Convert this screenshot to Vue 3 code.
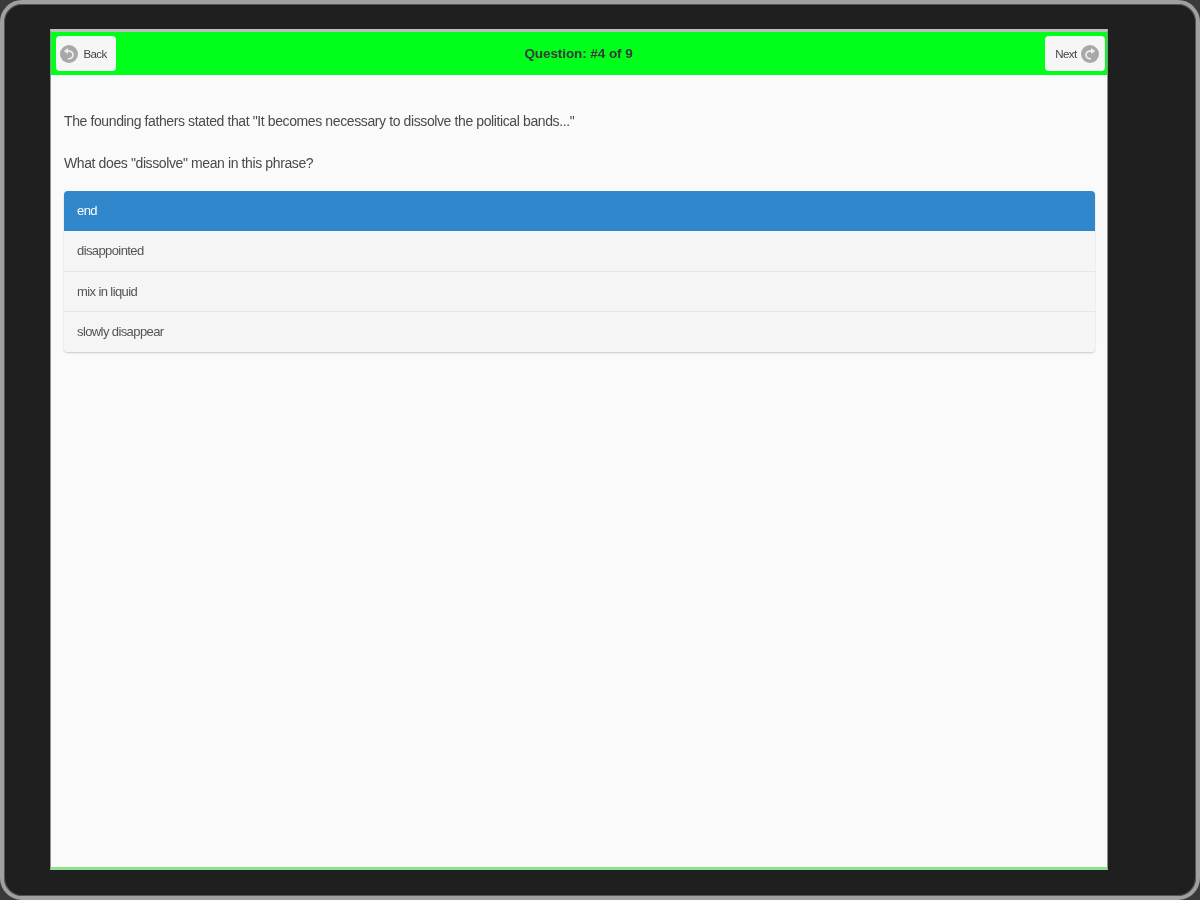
<script setup>
const answers = [
  { text: 'end', active: true },
  { text: 'disappointed', active: false },
  { text: 'mix in liquid', active: false },
  { text: 'slowly disappear', active: false }
]
</script>

<template>
  <div class="device">
    <div class="screen">
      <header class="bar">
        <button class="nav back">
          <svg class="icon" viewBox="0 0 18 18"><circle cx="9" cy="9" r="9" fill="#a8a8a8"/><path d="M7 6c3.500-.5 6 1.200 6 3.800 0 2.400-2 4-5 4.200" fill="none" stroke="#eee" stroke-width="1.700"/><path d="M3.800 6 8 3v6z" fill="#eee"/></svg>
          <span>Back</span>
        </button>
        <h1>Question: #4 of 9</h1>
        <button class="nav next">
          <span>Next</span>
          <svg class="icon" viewBox="0 0 18 18"><circle cx="9" cy="9" r="9" fill="#a8a8a8"/><path d="M11 6c-3.500-.5-6 1.200-6 3.800 0 2.400 2 4 5 4.200" fill="none" stroke="#eee" stroke-width="1.700"/><path d="M14.200 6 10 3v6z" fill="#eee"/></svg>
        </button>
      </header>
      <main class="content">
        <p>The founding fathers stated that "It becomes necessary to dissolve the political bands..."</p>
        <p>What does "dissolve" mean in this phrase?</p>
        <ul class="list">
          <li v-for="a in answers" :key="a.text" :class="{ active: a.active }">{{ a.text }}</li>
        </ul>
      </main>
    </div>
  </div>
</template>

<style>
html, body { margin: 0; background: #3a3a3a; }
</style>

<style scoped>
.device {
  box-sizing: border-box;
  width: 1200px;
  height: 900px;
  padding: 25px 88px 26px 46px;
  background: #1f1f1f;
  border: 4px solid #a0a0a0;
  border-radius: 22px;
  box-shadow: inset 0 0 0 1px #555;
  font-family: "Liberation Sans", Arial, sans-serif;
}
.screen {
  box-sizing: border-box;
  height: 100%;
  background: #fafafa;
  display: flex;
  flex-direction: column;
  border: 1px solid #8f8f8f;
  border-bottom: 3px solid #8fe08f;
  border-top: 3px solid #bdbdbd;
  filter: blur(0.7px);
}
.bar {
  height: 43px;
  flex: none;
  background: #00ff1a;
  display: flex;
  align-items: center;
  justify-content: space-between;
  padding: 0 2px 0 5px;
}
.bar h1 {
  margin: 0 4px 0 0;
  font-size: 13.500px;
  font-weight: 700;
  color: #3a3a3a;
  letter-spacing: -0.08px;
}
.nav {
  height: 35px;
  width: 60px;
  border: 0;
  border-radius: 4px;
  background: #f6f6f6;
  display: flex;
  align-items: center;
  font: 11.500px "Liberation Sans", Arial, sans-serif;
  color: #444;
  gap: 4px;
}
.back { padding: 0 8px 0 4px; }
.next { padding: 0 6px 0 10px; }
.nav span { flex: 1; text-align: center; letter-spacing: -0.6px; }
.icon { width: 18px; height: 18px; flex: none; }
.content {
  padding: 38px 12px 0 13px;
  color: #4a4a4a;
  font-size: 14px;
  letter-spacing: -0.39px;
}
.content p {
  margin: 0 0 26px;
  line-height: 16px;
}
.list {
  list-style: none;
  margin: -6px 0 0;
  padding: 0;
  border-radius: 4px;
  overflow: hidden;
  box-shadow: 0 1px 2px rgba(0,0,0,.2);
  font-size: 13px;
}
.list li {
  box-sizing: border-box;
  height: 40.300px;
  line-height: 39px;
  padding: 0 13px;
  background: #f5f5f5;
  border-bottom: 1px solid #e6e6e6;
  color: #555;
  letter-spacing: -0.6px;
}
.list li:last-child { border-bottom: 0; }
.list li.active {
  background: #3187cb;
  border-bottom: 0;
  color: #fff;
}
</style>
